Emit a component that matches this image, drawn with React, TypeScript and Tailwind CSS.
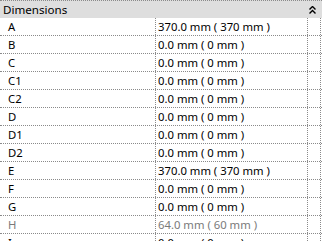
import React from 'react';

interface DimRow {
  name: string;
  value: string;
  disabled?: boolean;
}

const rows: DimRow[] = [
  { name: 'A', value: '370.0 mm ( 370 mm )' },
  { name: 'B', value: '0.0 mm ( 0 mm )' },
  { name: 'C', value: '0.0 mm ( 0 mm )' },
  { name: 'C1', value: '0.0 mm ( 0 mm )' },
  { name: 'C2', value: '0.0 mm ( 0 mm )' },
  { name: 'D', value: '0.0 mm ( 0 mm )' },
  { name: 'D1', value: '0.0 mm ( 0 mm )' },
  { name: 'D2', value: '0.0 mm ( 0 mm )' },
  { name: 'E', value: '370.0 mm ( 370 mm )' },
  { name: 'F', value: '0.0 mm ( 0 mm )' },
  { name: 'G', value: '0.0 mm ( 0 mm )' },
  { name: 'H', value: '64.0 mm ( 60 mm )', disabled: true },
  { name: 'I', value: '0.0 mm ( 0 mm )' },
];

function CollapseIcon() {
  return (
    <svg width="7" height="8" viewBox="0 0 7 8" className="block">
      <path d="M0.5 3.5 L3.5 0.5 L6.5 3.5 M0.5 7.5 L3.5 4.5 L6.5 7.5" fill="none" stroke="#000" strokeWidth="1.4" />
    </svg>
  );
}

export default function App() {
  return (
    <div className="w-[322px] h-[241px] overflow-hidden bg-white text-[11.3px] leading-none text-black" style={{ fontFamily: '"Segoe UI", "Noto Sans", sans-serif' }}>
      {/* Category header */}
      <div className="flex h-[18px] border-t border-dotted border-[#8a8a8a] bg-[#dedede]">
        <div className="flex-1 flex items-center pl-[3px] text-[11.6px]">Dimensions</div>
        <div className="w-[15px] flex items-center justify-start pl-[2px]">
          <CollapseIcon />
        </div>
      </div>

      {rows.map((row) => (
        <div key={row.name} className="flex h-[18px] border-b border-dotted border-[#8a8a8a]">
          <div className={`w-[156px] flex items-center pl-[8px] border-r border-dotted border-[#8a8a8a] ${row.disabled ? 'text-[#7a7a7a]' : ''}`}>
            {row.name}
          </div>
          <div className={`w-[152px] flex items-center pl-[2px] border-r border-dotted border-[#8a8a8a] ${row.disabled ? 'text-[#7a7a7a]' : ''}`}>
            {row.value}
          </div>
          <div className="w-[13px] border-r border-dotted border-[#8a8a8a]" />
        </div>
      ))}
    </div>
  );
}
